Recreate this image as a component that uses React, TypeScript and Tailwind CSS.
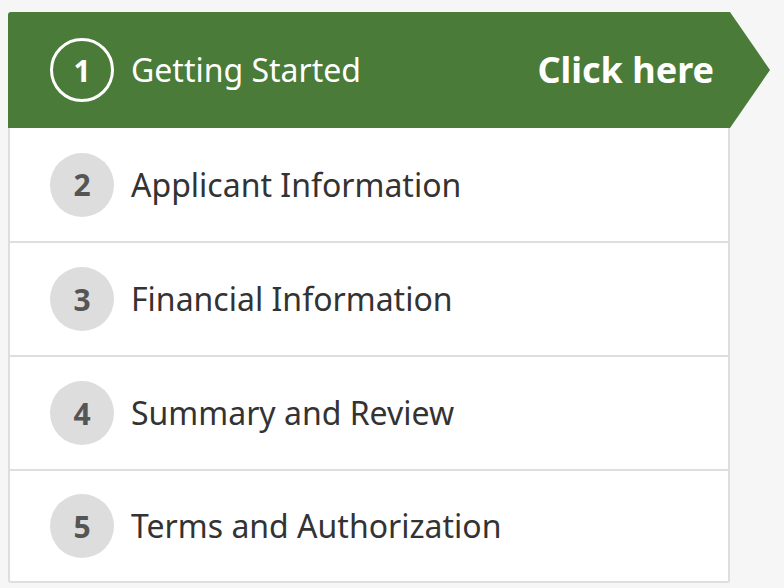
import React from 'react';

const steps = [
  { n: 2, label: 'Applicant Information' },
  { n: 3, label: 'Financial Information' },
  { n: 4, label: 'Summary and Review' },
  { n: 5, label: 'Terms and Authorization' },
];

export default function App() {
  return (
    <div className="min-h-screen bg-[#f6f6f6] pt-[12px] pl-[8px]" style={{ fontFamily: '"Noto Sans", "Open Sans", sans-serif' }}>
      <div className="w-[722px]">
        {/* active step */}
        <div className="relative flex h-[116px] items-center rounded-tl-[3px] bg-[#4a7b38] pl-[42px] pr-[16px] text-white">
          <div className="flex h-[64px] w-[64px] items-center justify-center rounded-full border-[3px] border-white text-[30px] font-bold">
            1
          </div>
          <span className="ml-[17px] text-[32px]">Getting Started</span>
          <span className="ml-auto text-[36px] font-bold">Click here</span>
          <svg className="absolute right-[-40px] top-0 h-[116px] w-[40px]" viewBox="0 0 40 116" preserveAspectRatio="none">
            <polygon points="0,0 40,58 0,116" fill="#4a7b38" />
          </svg>
        </div>
        <div className="rounded-b-[3px] border-x-2 border-b-2 border-[#dedede] bg-white">
          {steps.map((s, i) => (
            <div
              key={s.n}
              className={`flex items-center pl-[40px] ${i === 0 ? 'h-[113px]' : i === 3 ? 'h-[112px] border-t-2 border-[#dedede]' : 'h-[114px] border-t-2 border-[#dedede]'}`}
            >
              <div className="flex h-[64px] w-[64px] items-center justify-center rounded-full bg-[#dddddd] text-[30px] font-bold text-[#555555]">
                {s.n}
              </div>
              <span className="ml-[17px] text-[32px] text-[#333333]">{s.label}</span>
            </div>
          ))}
        </div>
      </div>
    </div>
  );
}
